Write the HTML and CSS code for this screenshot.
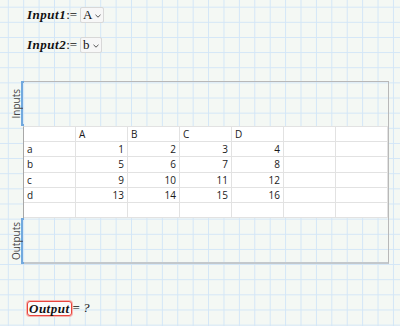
FILE: index.html
```html
<!DOCTYPE html>
<html>
<head>
<meta charset="utf-8">
<link rel="stylesheet" href="styles.css">
</head>
<body>
<div class="page">
  <div class="def">
    <span class="var">Input1</span><span class="assign">:=</span>
    <span class="dd"><span class="ddv">A</span><svg class="chev" width="6" height="4" viewBox="0 0 6 4"><path d="M0.5 0.8 L3 3.2 L5.5 0.8" fill="none" stroke="#555" stroke-width="1"/></svg></span>
  </div>
  <div class="def def2">
    <span class="var">Input2</span><span class="assign">:=</span>
    <span class="dd"><span class="ddv">b</span><svg class="chev" width="6" height="4" viewBox="0 0 6 4"><path d="M0.5 0.8 L3 3.2 L5.5 0.8" fill="none" stroke="#555" stroke-width="1"/></svg></span>
  </div>

  <div class="comp">
    <div class="sec sec-in">
      <div class="label"><span>Inputs</span></div>
      <div class="br"></div>
      <div class="area area-in"></div>
    </div>
    <div class="tablewrap">
      <div class="grid">
        <div class="c"></div><div class="c">A</div><div class="c">B</div><div class="c">C</div><div class="c">D</div><div class="c"></div><div class="c"></div>
        <div class="c">a</div><div class="c n">1</div><div class="c n">2</div><div class="c n">3</div><div class="c n">4</div><div class="c"></div><div class="c"></div>
        <div class="c">b</div><div class="c n">5</div><div class="c n">6</div><div class="c n">7</div><div class="c n">8</div><div class="c"></div><div class="c"></div>
        <div class="c">c</div><div class="c n">9</div><div class="c n">10</div><div class="c n">11</div><div class="c n">12</div><div class="c"></div><div class="c"></div>
        <div class="c">d</div><div class="c n">13</div><div class="c n">14</div><div class="c n">15</div><div class="c n">16</div><div class="c"></div><div class="c"></div>
        <div class="c"></div><div class="c"></div><div class="c"></div><div class="c"></div><div class="c"></div><div class="c"></div><div class="c"></div>
      </div>
    </div>
    <div class="sec sec-out">
      <div class="label"><span>Outputs</span></div>
      <div class="br"></div>
      <div class="area area-out"></div>
    </div>
  </div>

  <div class="def def3">
    <span class="var outbox">Output</span><span class="eq">=</span><span class="q">?</span>
  </div>
</div>
</body>
</html>
```

FILE: styles.css
```css
html, body {
  margin: 0;
  padding: 0;
}
body {
  width: 400px;
  height: 326px;
  overflow: hidden;
  background-color: #f4f8f4;
  background-image:
    linear-gradient(to right, #d3e6f7 1px, transparent 1px),
    linear-gradient(to bottom, #d3e6f7 1px, transparent 1px);
  background-size: 15.42px 15.15px;
  background-position: 7.8px 6.7px;
  font-family: "Liberation Serif", serif;
  color: #111;
}
.page {
  padding-top: 7px;
}
.def {
  display: flex;
  align-items: center;
  height: 16px;
  margin-left: 27px;
}
.def2 {
  margin-top: 14px;
}
.var {
  font-family: "Liberation Serif", serif;
  font-style: italic;
  font-weight: bold;
  font-size: 13px;
  letter-spacing: 0.5px;
}
.assign {
  font-size: 13px;
  margin-left: 0;
  margin-right: 3px;
}
.dd {
  display: flex;
  align-items: center;
  height: 14px;
  padding: 0 2px 0 2px;
  border: 1px solid #d8d8d8;
  border-radius: 2px;
  background: #f7f7f7;
}
.ddv {
  font-size: 13px;
  line-height: 14px;
}
.chev {
  margin-left: 3px;
  margin-top: 1px;
}
.comp {
  margin: 28px 0 0 12px;
  width: 377px;
}
.sec {
  display: flex;
  height: 45px;
}
.sec-out {
  height: 46px;
}
.label {
  width: 9px;
  display: flex;
  align-items: center;
  justify-content: center;
}
.label span {
  writing-mode: vertical-rl;
  transform: rotate(180deg);
  font-family: "Open Sans", sans-serif;
  font-size: 10px;
  line-height: 9px;
  color: #444;
}
.br {
  border: 2px solid #72a9de;
  border-right: none;
  box-sizing: border-box;
  width: 3px;
}
.area {
  flex: 1;
  border-right: 1px solid #b8b8b8;
}
.area-in {
  border-top: 1px solid #b8b8b8;
}
.area-out {
  border-bottom: 2px solid #c3c8cc;
}
.tablewrap {
  margin-left: 12px;
  border-right: 1px solid #b8b8b8;
}
.grid {
  display: grid;
  grid-template-columns: repeat(7, 52px);
  grid-auto-rows: 15.2px;
  background: #fff;
  border-left: 1px solid #a8a8a8;
  border-top: 1px solid #e2e2e2;
  margin-left: -1px;
}
.c {
  border-right: 1px solid #e2e2e2;
  border-bottom: 1px solid #e2e2e2;
  font-family: "Open Sans", sans-serif;
  font-size: 10px;
  line-height: 14px;
  padding: 0 3px;
  color: #1a1a1a;
  overflow: hidden;
}
.n {
  text-align: right;
}
.def3 {
  margin-top: 36px;
  margin-left: 27px;
}
.outbox {
  border: 1px solid #e8453e;
  box-shadow: 0 0 0 1px #f6b4b0;
  border-radius: 3px;
  padding: 0 1px;
  line-height: 13px;
  background: #fbfbfb;
}
.eq {
  font-size: 13px;
  margin-left: 1px;
}
.q {
  font-style: italic;
  font-size: 13px;
  margin-left: 3px;
}
```
